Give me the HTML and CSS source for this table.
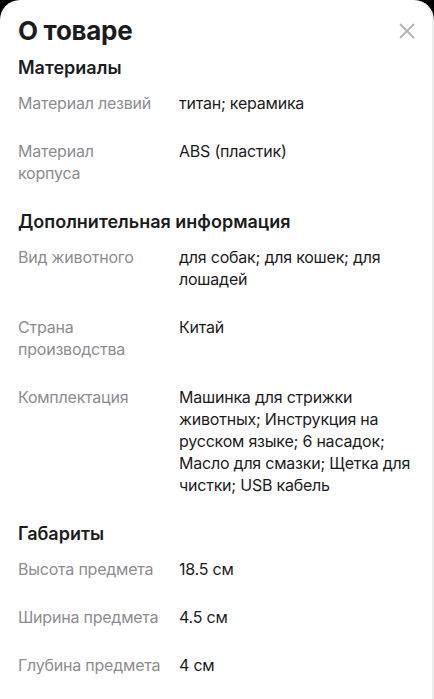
FILE: index.html
```html
<!DOCTYPE html>
<html lang="ru">
<head>
<meta charset="utf-8">
<link rel="stylesheet" href="styles.css">
</head>
<body>
<div class="sheet">
  <header class="top">
    <h1 class="title">О товаре</h1>
    <button class="close" aria-label="Закрыть">
      <svg width="16" height="16" viewBox="0 0 16 16"><path d="M1.5 1.5 L14.5 14.5 M14.5 1.5 L1.5 14.5" stroke="#b3b3b8" stroke-width="1.8" stroke-linecap="round" fill="none"/></svg>
    </button>
  </header>

  <section class="group">
    <h2 class="heading">Материалы</h2>
    <div class="row"><div class="label">Материал лезвий</div><div class="value">титан; керамика</div></div>
    <div class="row"><div class="label">Материал<br>корпуса</div><div class="value">ABS (пластик)</div></div>
  </section>

  <section class="group">
    <h2 class="heading">Дополнительная информация</h2>
    <div class="row"><div class="label">Вид животного</div><div class="value">для собак; для кошек; для лошадей</div></div>
    <div class="row"><div class="label">Страна производства</div><div class="value">Китай</div></div>
    <div class="row"><div class="label">Комплектация</div><div class="value">Машинка для стрижки животных; Инструкция на русском языке; 6 насадок; Масло для смазки; Щетка для чистки; USB кабель</div></div>
  </section>

  <section class="group">
    <h2 class="heading">Габариты</h2>
    <div class="row"><div class="label">Высота предмета</div><div class="value">18.5 см</div></div>
    <div class="row"><div class="label">Ширина предмета</div><div class="value">4.5 см</div></div>
    <div class="row"><div class="label">Глубина предмета</div><div class="value">4 см</div></div>
  </section>
</div>
</body>
</html>
```

FILE: styles.css
```css
html, body {
  margin: 0;
  padding: 0;
  background: #000;
}
body {
  font-family: Inter, "Noto Sans", sans-serif;
  color: #1c1c1e;
}
.sheet {
  background: #fff;
  border-radius: 20px 20px 0 0;
  min-height: 699px;
  padding: 15px 16px 0 18px;
  box-sizing: border-box;
  border-right: 2px solid #ececec;
}
.top {
  display: flex;
  align-items: center;
  justify-content: space-between;
  height: 32px;
  margin-bottom: 9px;
}
.title {
  margin: 0;
  font-size: 26px;
  line-height: 32px;
  font-weight: 700;
  letter-spacing: -0.3px;
}
.close {
  border: 0;
  background: none;
  padding: 0;
  width: 18px;
  height: 18px;
  display: flex;
  align-items: center;
  justify-content: center;
}
.group + .group {
  margin-top: 2px;
}
.heading {
  margin: 0 0 12px 0;
  font-size: 18px;
  line-height: 24px;
  font-weight: 600;
}
.row {
  display: flex;
  margin-bottom: 26px;
  font-size: 16px;
  line-height: 22px;
  letter-spacing: -0.22px;
}
.label {
  flex: 0 0 143px;
  margin-right: 18px;
  color: #8c8c91;
}
.value {
  flex: 0 0 237px;
  color: #1c1c1e;
}
```
